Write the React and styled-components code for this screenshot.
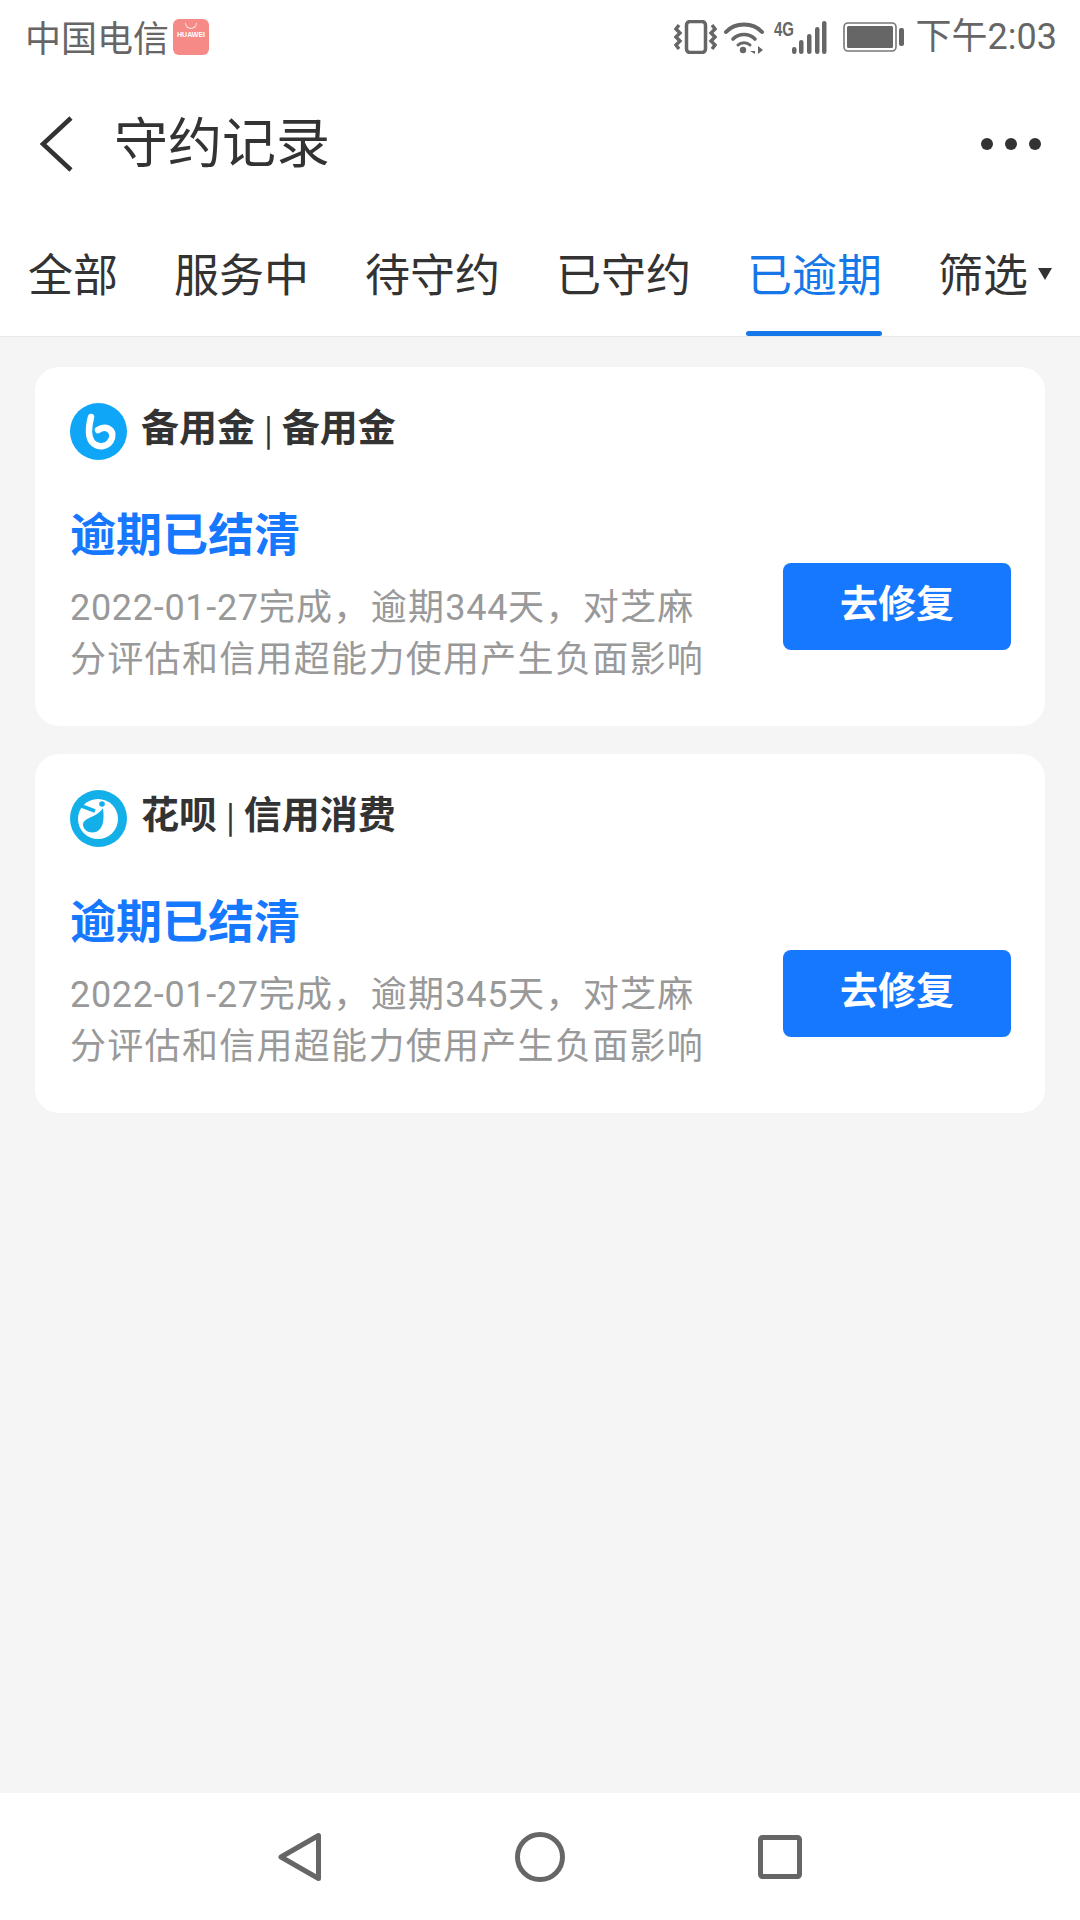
import React from 'react'
import styled, { createGlobalStyle } from 'styled-components'

const GlobalStyle = createGlobalStyle`
  html, body {
    margin: 0;
    padding: 0;
    background: #f5f5f5;
  }
  * {
    box-sizing: border-box;
  }
`

const Page = styled.div`
  width: 1080px;
  height: 1920px;
  display: flex;
  flex-direction: column;
  background: #f5f5f5;
  font-family: "Noto Sans CJK SC", "Noto Sans", sans-serif;
`

const StatusBar = styled.div`
  height: 72px;
  flex-shrink: 0;
  display: flex;
  align-items: center;
  justify-content: space-between;
  padding: 2px 23px 0 25px;
  background: #fff;
  color: #666;
`

const StatusGroup = styled.div`
  display: flex;
  align-items: center;
  gap: ${props => props.$gap}px;
`

const Carrier = styled.span`
  font-size: 36px;
  line-height: 40px;
  margin-top: -2px;
`

const Clock = styled.span`
  font-size: 36px;
  line-height: 40px;
  font-family: Roboto, "Noto Sans CJK SC", sans-serif;
  margin-left: 1px;
`

const AppBadge = styled.div`
  width: 36px;
  height: 36px;
  border-radius: 6px;
  background: #f58a86;
  display: flex;
  flex-direction: column;
  align-items: center;
  color: #fff;
  padding-top: 4px;
`

const BadgeSmile = styled.div`
  width: 12px;
  height: 6px;
  border: 1.5px solid #fde4e2;
  border-top: none;
  border-radius: 0 0 8px 8px;
`

const BadgeText = styled.span`
  font-family: "Liberation Sans", sans-serif;
  font-size: 7px;
  line-height: 12px;
  font-weight: bold;
`

const TopBar = styled.div`
  height: 143px;
  flex-shrink: 0;
  display: flex;
  align-items: center;
  padding: 0 39px 0 38px;
  background: #fff;
`

const BackButton = styled.svg`
  width: 36px;
  height: 58px;
  flex-shrink: 0;
`

const Title = styled.h1`
  flex: 1;
  margin: -8px 0 0 40px;
  font-size: 54px;
  line-height: 70px;
  font-weight: 400;
  color: #333;
`

const MoreDots = styled.div`
  display: flex;
  gap: 12px;
`

const Dot = styled.span`
  width: 12px;
  height: 12px;
  border-radius: 50%;
  background: #333;
`

const Tabs = styled.div`
  height: 122px;
  flex-shrink: 0;
  display: flex;
  justify-content: space-between;
  padding: 0 28px 0 28px;
  background: #fff;
  border-bottom: 1px solid #e8e8e8;
`

const Tab = styled.div`
  position: relative;
  padding-top: 29px;
  font-size: 45px;
  line-height: 58px;
  color: ${props => (props.$active ? '#1677e8' : '#333')};
  display: flex;
  align-items: flex-start;

  ${props => props.$active && `
    &::after {
      content: '';
      position: absolute;
      left: -1px;
      right: 0;
      bottom: 0;
      height: 5px;
      border-radius: 3px;
      background: #1677e8;
    }
  `}
`

const Caret = styled.span`
  width: 0;
  height: 0;
  margin: 24px 0 0 10px;
  border-left: 7px solid transparent;
  border-right: 7px solid transparent;
  border-top: 12px solid #333;
`

const List = styled.div`
  flex: 1;
  display: flex;
  flex-direction: column;
  gap: 28px;
  padding: 30px 35px 0;
`

const Card = styled.div`
  height: 359px;
  background: #fff;
  border-radius: 24px;
  padding: 36px 34px 0 35px;
`

const CardHead = styled.div`
  display: flex;
  align-items: center;
  gap: 14px;
  height: 57px;
`

const ProductName = styled.div`
  font-size: 38px;
  line-height: 50px;
  font-weight: 700;
  color: #333;
  margin-top: -11px;
`

const Sep = styled.span`
  font-weight: 500;
  font-size: 30px;
  margin: 0 0.5px;
`

const CardBody = styled.div`
  display: flex;
  justify-content: space-between;
  align-items: flex-end;
  margin-top: 41px;
`

const Status = styled.div`
  font-size: 46px;
  line-height: 60px;
  font-weight: 700;
  color: #1677ff;
`

const Desc = styled.div`
  margin-top: 17px;
  font-size: 36px;
  line-height: 52px;
  letter-spacing: 1.3px;
  color: #999;
  white-space: nowrap;
`

const Num = styled.span`
  font-family: Roboto, sans-serif;
  letter-spacing: 0.7px;
  line-height: 1;
`

const Repair = styled.button`
  width: 228px;
  height: 87px;
  margin-bottom: 32px;
  border: none;
  border-radius: 8px;
  background: #1677ff;
  color: #fff;
  font-family: inherit;
  font-size: 38px;
  font-weight: 700;
  padding: 0 0 12px;
`

const NavBar = styled.div`
  height: 127px;
  flex-shrink: 0;
  display: flex;
  align-items: center;
  justify-content: center;
  gap: 190px;
  background: #fff;
`

const NavIcon = styled.svg`
  width: 50px;
  height: 50px;
  fill: none;
  stroke: #666;
  stroke-width: 5;
  stroke-linejoin: round;
`

const Vibrate = styled.svg`
  margin-right: -3px;
`

const VibrateIcon = () => (
  <Vibrate width="43" height="34" viewBox="0 0 43 34" fill="none" stroke="#666">
    <rect x="12.5" y="1.5" width="19" height="31" rx="3.5" strokeWidth="3.5" />
    <path d="M5 5 L2 9 L6 13 L2 17 L6 21 L2 25 L5 29" strokeWidth="3.4" />
    <path d="M38 5 L41 9 L37 13 L41 17 L37 21 L41 25 L38 29" strokeWidth="3.4" />
  </Vibrate>
)

const WifiIcon = () => (
  <svg width="40" height="33" viewBox="0 0 40 33" fill="none" stroke="#666" strokeLinecap="round">
    <path d="M2 11 C11 1 29 1 38 11" strokeWidth="4" />
    <path d="M9 18 C15 12 25 12 31 18" strokeWidth="3.6" />
    <path d="M14 24 C17 21 23 21 26 24" strokeWidth="3" />
    <circle cx="19" cy="29" r="3.2" fill="#666" stroke="none" />
    <path d="M31 25 V33 L26 30 H31 M34 25 V33 L39 29 Z" fill="#666" stroke="none" />
  </svg>
)

const SignalIcon = () => (
  <svg width="59" height="41" viewBox="0 -3 59 41" fill="#666">
    <text
      x="0"
      y="16"
      fontSize="21"
      fontWeight="700"
      fontFamily="Liberation Sans, sans-serif"
      textLength="20"
      lengthAdjust="spacingAndGlyphs"
    >
      4G
    </text>
    <rect x="18" y="27" width="4.5" height="7" rx="2.2" />
    <rect x="25" y="20" width="4.5" height="14" rx="2.2" />
    <rect x="33" y="14" width="4.5" height="20" rx="2.2" />
    <rect x="41" y="7" width="4.5" height="27" rx="2.2" />
    <rect x="48" y="1" width="4.5" height="33" rx="2.2" />
  </svg>
)

const BatteryIcon = () => (
  <svg width="62" height="30" viewBox="0 0 62 30">
    <rect x="1" y="1" width="52" height="28" rx="4" fill="none" stroke="#777" strokeWidth="1.6" />
    <rect x="4" y="4" width="46" height="22" rx="1.5" fill="#666" />
    <rect x="56" y="6" width="5" height="18" rx="2" fill="#666" />
  </svg>
)

const BeiyongjinLogo = () => (
  <svg width="57" height="57" viewBox="0 0 57 57" fill="none">
    <circle cx="28.5" cy="28.5" r="28.5" fill="#0fa6f7" />
    <path
      d="M21 14 C18 26 18 34 22 39 C28 46 39 44 42 35 C44 26 35 22 28 27"
      stroke="#fff"
      strokeWidth="6.5"
      strokeLinecap="round"
    />
  </svg>
)

const HuabeiLogo = () => (
  <svg width="57" height="57" viewBox="0 0 57 57" fill="none">
    <circle cx="28.5" cy="28.5" r="28.5" fill="#12afe8" />
    <circle cx="28" cy="29" r="20" fill="#fff" />
    <path d="M9 15 L25 21" stroke="#12afe8" strokeWidth="3.5" />
    <path d="M33 18 C34 27 34 34 30 39 C25 45 14 43 13 35 C13 27 27 28 33 18 Z" fill="#12afe8" />
    <circle cx="32" cy="14" r="2.8" fill="#12afe8" />
  </svg>
)

const records = [
  { name: ['备用金', '备用金'], days: 344, Logo: BeiyongjinLogo },
  { name: ['花呗', '信用消费'], days: 345, Logo: HuabeiLogo },
]

const tabs = ['全部', '服务中', '待守约', '已守约', '已逾期']

const App = () => {
  return (
    <Page>
      <GlobalStyle />
      <StatusBar>
        <StatusGroup $gap={4}>
          <Carrier>中国电信</Carrier>
          <AppBadge>
            <BadgeSmile />
            <BadgeText>HUAWEI</BadgeText>
          </AppBadge>
        </StatusGroup>
        <StatusGroup $gap={10}>
          <VibrateIcon />
          <WifiIcon />
          <SignalIcon />
          <BatteryIcon />
          <Clock>下午2:03</Clock>
        </StatusGroup>
      </StatusBar>

      <TopBar>
        <BackButton viewBox="0 0 36 58" fill="none" stroke="#333" strokeWidth="4.5">
          <path d="M33 3 L5 29 L33 55" />
        </BackButton>
        <Title>守约记录</Title>
        <MoreDots>
          <Dot />
          <Dot />
          <Dot />
        </MoreDots>
      </TopBar>

      <Tabs>
        {tabs.map(t => (
          <Tab key={t} $active={t === '已逾期'}>{t}</Tab>
        ))}
        <Tab>
          筛选
          <Caret />
        </Tab>
      </Tabs>

      <List>
        {records.map(({ name, days, Logo }) => (
          <Card key={days}>
            <CardHead>
              <Logo />
              <ProductName>
                {name[0]} <Sep>|</Sep> {name[1]}
              </ProductName>
            </CardHead>
            <CardBody>
              <div>
                <Status>逾期已结清</Status>
                <Desc>
                  <Num>2022-01-27</Num>完成，逾期<Num>{days}</Num>天，对芝麻
                  <br />
                  分评估和信用超能力使用产生负面影响
                </Desc>
              </div>
              <Repair>去修复</Repair>
            </CardBody>
          </Card>
        ))}
      </List>

      <NavBar>
        <NavIcon viewBox="0 0 50 50">
          <path d="M43.5 3.5 V46.5 L6 25 Z" />
        </NavIcon>
        <NavIcon viewBox="0 0 50 50">
          <circle cx="25" cy="25" r="22.5" />
        </NavIcon>
        <NavIcon viewBox="0 0 50 50">
          <rect x="5.5" y="5.5" width="39" height="39" rx="2" />
        </NavIcon>
      </NavBar>
    </Page>
  )
}

export default App
